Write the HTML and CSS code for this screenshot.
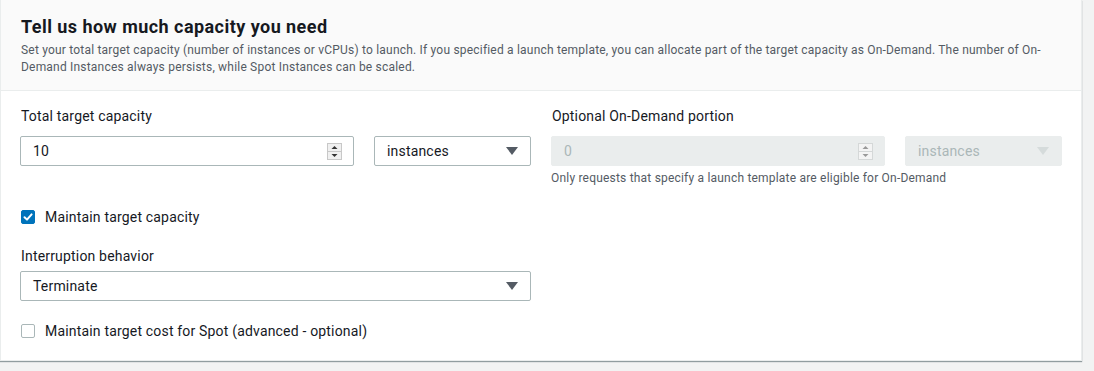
FILE: index.html
```html
<!DOCTYPE html>
<html lang="en">
<head>
    <meta charset="UTF-8">
    <meta name="viewport" content="width=device-width, initial-scale=1.0">
    <title>Capacity</title>
    <link rel="stylesheet" href="styles.css">
</head>
<body>
    <div class="panel">
        <div class="panel-header">
            <h2>Tell us how much capacity you need</h2>
            <p class="description">Set your total target capacity (number of instances or vCPUs) to launch. If you specified a launch template, you can allocate part of the target capacity as On-Demand. The number of On-Demand Instances always persists, while Spot Instances can be scaled.</p>
        </div>
        <div class="panel-body">
            <div class="field">
                <label class="label">Total target capacity</label>
                <div class="control-row">
                    <div class="number-input">
                        <span>10</span>
                        <svg class="spinner" width="15" height="17" viewBox="0 0 15 17">
                            <rect x="0.5" y="0.5" width="14" height="16" fill="#f0f0f0" stroke="#c8c8c8"/>
                            <line x1="1" y1="8.5" x2="14" y2="8.5" stroke="#c8c8c8"/>
                            <path d="M4.5 6 L7.5 3 L10.5 6 Z" fill="#333"/>
                            <path d="M4.5 11 L7.5 14 L10.5 11 Z" fill="#333"/>
                        </svg>
                    </div>
                    <div class="select">
                        <span>instances</span>
                        <svg width="12" height="8" viewBox="0 0 12 8"><path d="M0 0 L12 0 L6 8 Z" fill="#545b64"/></svg>
                    </div>
                </div>
            </div>
            <div class="field">
                <label class="label">Optional On-Demand portion</label>
                <div class="control-row">
                    <div class="number-input disabled">
                        <span>0</span>
                        <svg class="spinner" width="15" height="17" viewBox="0 0 15 17">
                            <rect x="0.5" y="0.5" width="14" height="16" fill="#f4f4f4" stroke="#d5d8d8"/>
                            <line x1="1" y1="8.5" x2="14" y2="8.5" stroke="#d5d8d8"/>
                            <path d="M4.5 6 L7.5 3 L10.5 6 Z" fill="#999"/>
                            <path d="M4.5 11 L7.5 14 L10.5 11 Z" fill="#999"/>
                        </svg>
                    </div>
                    <div class="select disabled">
                        <span>instances</span>
                        <svg width="12" height="8" viewBox="0 0 12 8"><path d="M0 0 L12 0 L6 8 Z" fill="#d5dbdb"/></svg>
                    </div>
                </div>
                <p class="help">Only requests that specify a launch template are eligible for On-Demand</p>
            </div>

            <div class="left-stack">
                <label class="checkbox">
                    <span class="box checked">
                        <svg width="14" height="14" viewBox="0 0 14 14"><path d="M3.5 7.2 L6 9.6 L10.6 4.4" fill="none" stroke="#fff" stroke-width="2" stroke-linecap="round" stroke-linejoin="round"/></svg>
                    </span>
                    Maintain target capacity
                </label>

                <label class="label spaced">Interruption behavior</label>
                <div class="select wide">
                    <span>Terminate</span>
                    <svg width="12" height="8" viewBox="0 0 12 8"><path d="M0 0 L12 0 L6 8 Z" fill="#545b64"/></svg>
                </div>

                <label class="checkbox">
                    <span class="box"></span>
                    Maintain target cost for Spot (advanced - optional)
                </label>
            </div>
        </div>
    </div>
</body>
</html>
```

FILE: styles.css
```css
/* Basic reset */
* {
    margin: 0;
    padding: 0;
    box-sizing: border-box;
}

body {
    font-family: Roboto, "Liberation Sans", sans-serif;
    background: #f2f3f3;
    color: #16191f;
    height: 100vh;
    letter-spacing: 0.18px;
}

/* Card */
.panel {
    width: 1082px;
    background: #fff;
    border: 1px solid #eaeded;
    border-top: none;
    box-shadow: 0 1px 1px 0 rgba(0, 28, 36, 0.4);
}

.panel-header {
    background: #fafafa;
    border-bottom: 1px solid #eaeded;
    padding: 16px 20px 14px;
}

.panel-header h2 {
    font-size: 18px;
    line-height: 22px;
    font-weight: 700;
    letter-spacing: 0.45px;
}

.description {
    margin-top: 4px;
    font-size: 12px;
    line-height: 17px;
    color: #545b64;
    letter-spacing: 0.2px;
}

/* Form body */
.panel-body {
    display: grid;
    grid-template-columns: 511px 511px;
    column-gap: 20px;
    padding: 15px 19px 19px 19px;
}

.label {
    display: block;
    font-size: 14px;
    line-height: 20px;
    padding-left: 1px;
}

.field .label {
    margin-bottom: 10px;
}

.control-row {
    display: flex;
    gap: 20px;
}

.number-input,
.select {
    height: 30px;
    border: 1px solid #aab7b8;
    border-radius: 2px;
    display: flex;
    align-items: center;
    font-size: 14px;
    padding: 0 12px 0 12px;
    color: #16191f;
    background: #fff;
}

.number-input {
    width: 334px;
    justify-content: space-between;
    padding-right: 11px;
}

.select {
    flex: 1;
    justify-content: space-between;
}

.select.wide {
    width: 511px;
    flex: none;
    margin-top: 5px;
}

.disabled {
    background: #eaeded;
    border-color: #eaeded;
    color: #aab7b8;
}

.help {
    margin-top: 4px;
    font-size: 12px;
    line-height: 16px;
    color: #545b64;
    letter-spacing: 0.2px;
}

.left-stack {
    grid-column: 1;
    margin-top: 21px;
}

.label.spaced {
    margin-top: 19px;
}

/* Checkboxes */
.checkbox {
    display: flex;
    align-items: center;
    gap: 10px;
    font-size: 14px;
    line-height: 20px;
    padding-left: 1px;
}

.select + .checkbox {
    margin-top: 20px;
}

.box {
    width: 14px;
    height: 14px;
    border: 1px solid #aab7b8;
    border-radius: 2px;
    background: #fff;
    display: flex;
}

.box.checked {
    background: #0073bb;
    border-color: #0073bb;
}

.box svg {
    margin: -1px;
}
```
